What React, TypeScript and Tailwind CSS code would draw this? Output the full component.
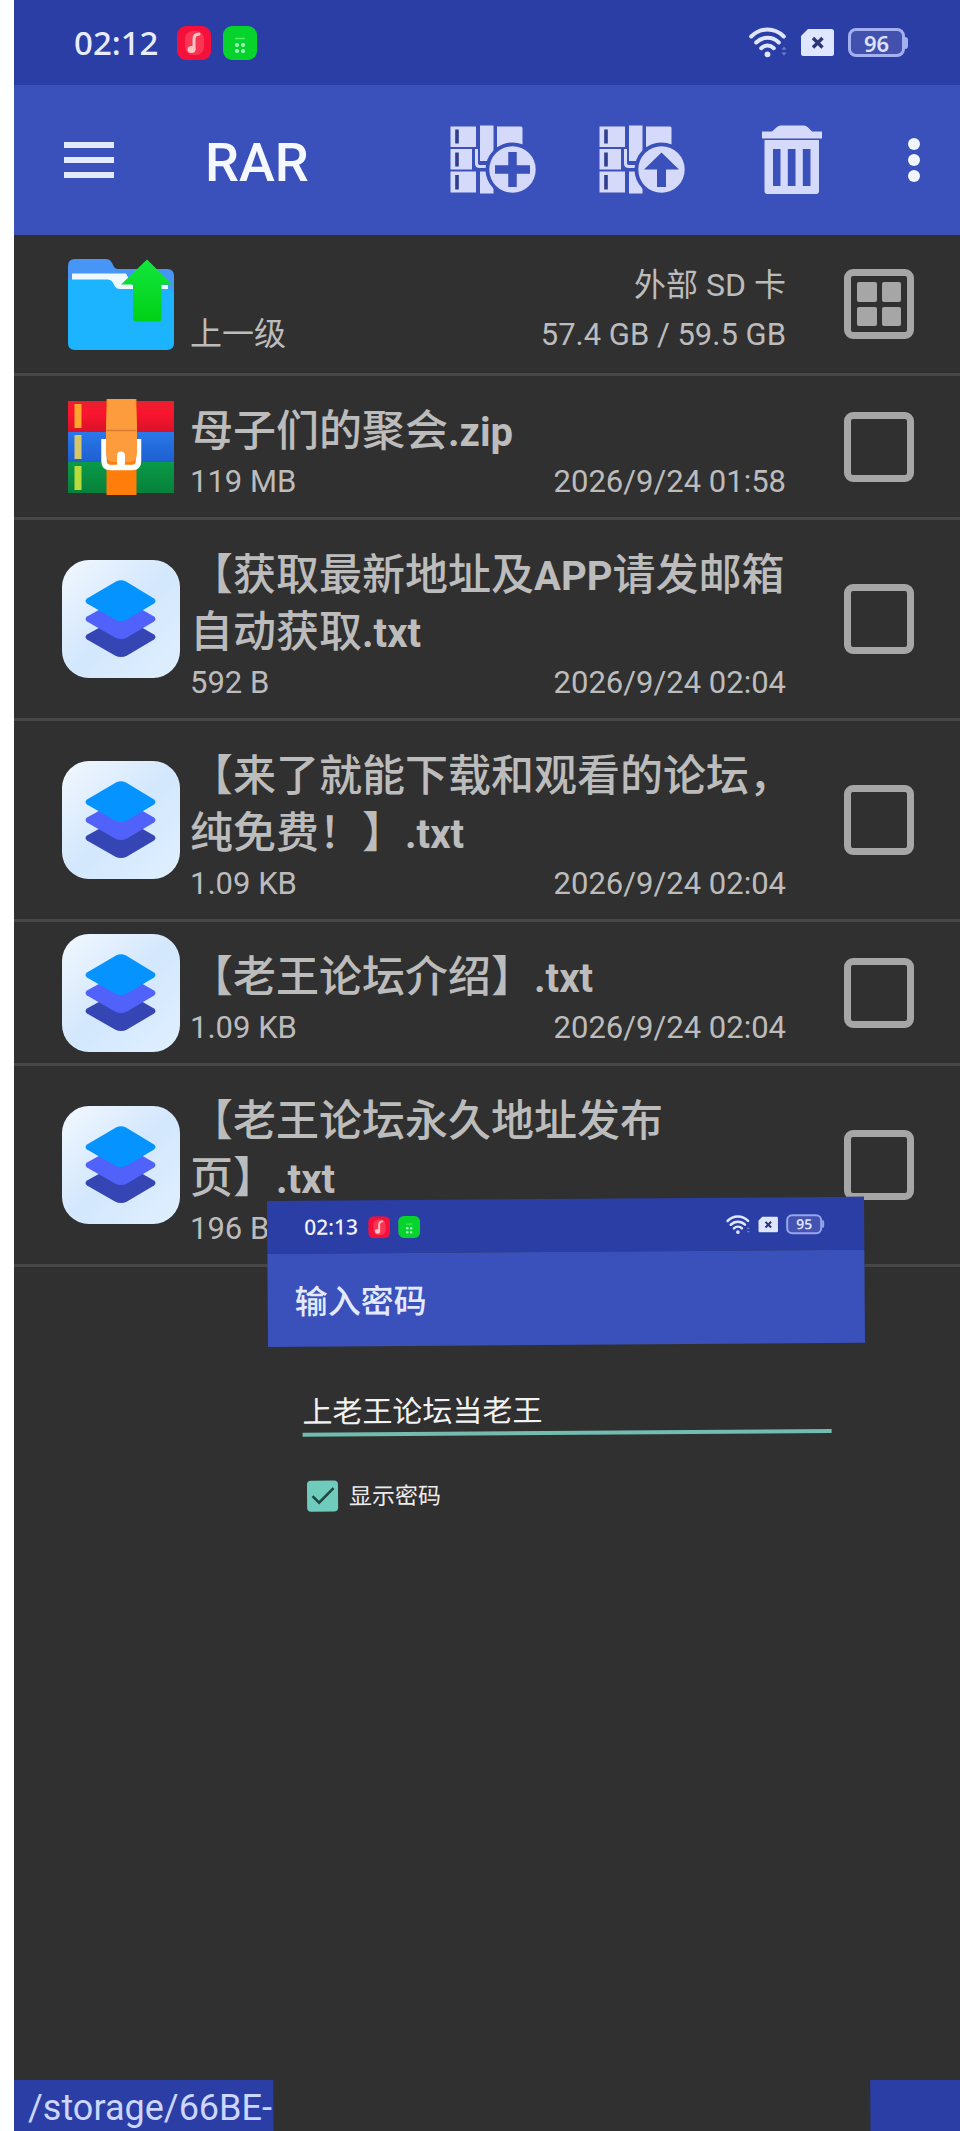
import React from "react";

const SANS = "font-['Roboto','Noto_Sans_CJK_SC',sans-serif]";
const CLOCK = "font-['Noto_Sans','Noto_Sans_CJK_SC',sans-serif]";

type FileEntry = { lines: string[]; size: string; date: string; kind: "zip" | "txt" };

const files: FileEntry[] = [
  { lines: ["母子们的聚会.zip"], size: "119 MB", date: "2026/9/24 01:58", kind: "zip" },
  { lines: ["【获取最新地址及APP请发邮箱", "自动获取.txt"], size: "592 B", date: "2026/9/24 02:04", kind: "txt" },
  { lines: ["【来了就能下载和观看的论坛，", "纯免费！】.txt"], size: "1.09 KB", date: "2026/9/24 02:04", kind: "txt" },
  { lines: ["【老王论坛介绍】.txt"], size: "1.09 KB", date: "2026/9/24 02:04", kind: "txt" },
  { lines: ["【老王论坛永久地址发布", "页】.txt"], size: "196 B", date: "2026/9/24 02:04", kind: "txt" },
];

function MusicIcon({ className }: { className: string }) {
  return (
    <svg viewBox="0 0 34 34" className={className} aria-hidden="true">
      <rect width="34" height="34" rx="9" fill="#f5103c" />
      <rect x="8" y="5" width="19" height="24" rx="8" fill="#fb4f63" opacity="0.6" />
      <path d="M22 8c-4 0-5 2-5 5v10" fill="none" stroke="#ffc4c4" strokeWidth="3" strokeLinecap="round" />
      <ellipse cx="14.5" cy="23.5" rx="4" ry="3.6" fill="#ffc4c4" />
    </svg>
  );
}

function GreenIcon({ className }: { className: string }) {
  return (
    <svg viewBox="0 0 34 34" className={className} aria-hidden="true">
      <rect width="34" height="34" rx="9" fill="#06d32c" />
      <path d="M12 12.5h10" stroke="#4df070" strokeWidth="1.5" />
      <g fill="#a4ffc0">
        <circle cx="14" cy="19" r="2" />
        <circle cx="20" cy="19" r="2" />
        <circle cx="14" cy="25" r="2" />
        <circle cx="20" cy="25" r="2" />
      </g>
    </svg>
  );
}

function WifiIcon({ className }: { className: string }) {
  return (
    <svg viewBox="0 0 38 31" className={className} aria-hidden="true">
      <g fill="none" stroke="#dfe6ff" strokeWidth="4" strokeLinecap="round">
        <path d="M2.2 9.5C11.5 .2 25.5 .2 34.8 9.5" />
        <path d="M7.2 15.5c6.5-6.3 16.1-6.3 22.6 0" />
        <path d="M12.2 21.2c3.7-3.5 8.9-3.5 12.6 0" />
      </g>
      <circle cx="18.5" cy="27.3" r="2.9" fill="#dfe6ff" />
      <path d="M32.5 22.5l2.5-3 2.5 3zM32.5 25.5l2.5 3 2.5-3z" fill="#6f7fd0" />
    </svg>
  );
}

function SimIcon({ className }: { className: string }) {
  return (
    <svg viewBox="0 0 33 27" className={className} aria-hidden="true">
      <path d="M7 0h23.500A2.500 2.500 0 0 1 33 2.500v22a2.500 2.500 0 0 1-2.500 2.500h-28A2.500 2.500 0 0 1 0 24.500V7z" fill="#dfe6ff" />
      <path d="M12 9l9.500 9.500M21.500 9L12 18.500" stroke="#2b3674" strokeWidth="3.400" />
    </svg>
  );
}

function ArchiveIcon({ children }: { children: React.ReactNode }) {
  return (
    <svg viewBox="0 0 87 70" className="h-[70px] w-[87px]" aria-hidden="true">
      <g fill="#d5dafa">
        <path d="M0.500 1.500H26V22H0.500zM0.500 24H22V44.500H0.500zM0.500 46.500H26V67.500H0.500z" />
        <path d="M30 0.500H43.500V36H30zM30 46.500H43.500V68.500H30z" />
        <path d="M47 1.500H71a1.500 1.500 0 0 1 1.500 1.500V22H47z" />
      </g>
      <path d="M26.500 24V38.500Q26.500 41.500 30 41.500H42" fill="none" stroke="#d5dafa" strokeWidth="3" />
      <path d="M7 4.500V18.500M7 27.500V41.500M7 50V64.500" stroke="#2e3f8f" strokeWidth="3.600" />
      <circle cx="62.500" cy="44.500" r="27" fill="#3a50ba" />
      <circle cx="62.500" cy="44.500" r="23.200" fill="#d5dafa" />
      {children}
    </svg>
  );
}

function TrashIcon() {
  return (
    <svg viewBox="0 0 60 70" className="h-[70px] w-[60px]" aria-hidden="true">
      <path d="M0 6.500H10L15 2Q16.500 .5 18.500 .5H42Q44 .5 45.500 2L50 6.500H60V13.500H0z" fill="#d5dafa" />
      <path
        fillRule="evenodd"
        d="M2.500 15H57V66a3 3 0 0 1-3 3H5.500a3 3 0 0 1-3-3zM11 24V61H18.500V24zM25.800 24V61H33.500V24zM40.800 24V61H48.500V24z"
        fill="#d5dafa"
      />
    </svg>
  );
}

function FolderUpIcon() {
  return (
    <svg viewBox="0 0 106 91" className="h-[91px] w-[106px]" aria-hidden="true">
      <defs>
        <linearGradient id="upArrow" x1="0" y1="0" x2="0" y2="1">
          <stop offset="0" stopColor="#12e63c" />
          <stop offset="1" stopColor="#00d016" />
        </linearGradient>
      </defs>
      <path d="M7 0H38Q42 0 44 4L46 8Q47.500 10 50 10H99Q106 10 106 17V50H0V7Q0 0 7 0z" fill="#4796f7" />
      <path d="M4 14.500H58L64 26H100V34H4z" fill="#eef9ff" />
      <path d="M0 20.500H40Q43 20.500 44.500 23L47 27.500Q48.500 30 52 30H100Q106 30 106 36V84Q106 91 99 91H7Q0 91 0 84z" fill="#1cb4ff" />
      <path d="M79 .5L104.500 25.500H93.500V59.500Q93.500 62.500 90.500 62.500H68Q65 62.500 65 59.500V25.500H53z" fill="url(#upArrow)" />
    </svg>
  );
}

function ZipIcon() {
  return (
    <svg viewBox="0 0 106 96" className="h-[96px] w-[106px]" aria-hidden="true">
      <defs>
        <linearGradient id="bandRed" x1="0" y1="0" x2="0" y2="1">
          <stop offset="0" stopColor="#e8202e" />
          <stop offset="0.400" stopColor="#fb1530" />
          <stop offset="1" stopColor="#d81228" />
        </linearGradient>
        <linearGradient id="bandBlue" x1="0" y1="0" x2="0" y2="1">
          <stop offset="0" stopColor="#2a78ea" />
          <stop offset="1" stopColor="#1d5fd0" />
        </linearGradient>
        <linearGradient id="bandGreen" x1="0" y1="0" x2="0" y2="1">
          <stop offset="0" stopColor="#0a9a48" />
          <stop offset="1" stopColor="#07803a" />
        </linearGradient>
      </defs>
      <path d="M0 2H106V33H0z" fill="url(#bandRed)" />
      <path d="M0 33H106V63H0z" fill="url(#bandBlue)" />
      <path d="M0 63H106V94H0z" fill="url(#bandGreen)" />
      <path d="M6.500 5H13.500V29H6.500z" fill="#ffa52c" />
      <path d="M6.500 36H13.500V60H6.500z" fill="#d8c66a" />
      <path d="M6.500 67H13.500V91H6.500z" fill="#b8dc3c" />
      <path d="M38.500 0H68.500V96H38.500z" fill="#ff7d0a" />
      <path d="M36 40V62Q36 68.500 42.500 68.500H64Q70.500 68.500 70.500 62V40" fill="none" stroke="#fff" strokeWidth="5.500" />
      <path d="M39.500 0H67.500Q69 18 69 32V54Q69 63 61 63H46Q38 63 38 54V32Q38 18 39.500 0z" fill="#fd9c3c" />
      <path d="M38.500 31.500H68.500" stroke="#d87a30" strokeWidth="1.500" />
      <path d="M49 66V57Q49 52.500 53 52.500T57 57V66z" fill="#fff" />
    </svg>
  );
}

function LayersIcon() {
  return (
    <svg viewBox="0 0 118 118" className="h-[118px] w-[118px]" aria-hidden="true">
      <defs>
        <linearGradient id="tile" x1="0" y1="0" x2="1" y2="1">
          <stop offset="0" stopColor="#f2f8ff" />
          <stop offset="0.500" stopColor="#d3e7fd" />
          <stop offset="1" stopColor="#dff0ff" />
        </linearGradient>
      </defs>
      <rect width="118" height="118" rx="27" fill="url(#tile)" />
      <path d="M25 74.500L54 58.500Q59 56 64 58.500L92 74.500Q95 77 92 79.500L65 95.500Q59 98.500 53 95.500L25 79.500Q22 77 25 74.500z" fill="#3545b4" />
      <path d="M25 56.500L54 40.500Q59 38 64 40.500L92 56.500Q95 59 92 61.500L65 77.500Q59 80.500 53 77.500L25 61.500Q22 59 25 56.500z" fill="#5162fb" />
      <path d="M25 38.500L54 21.500Q59 19 64 21.500L92 38.500Q95 41 92 43.500L65 59.500Q59 62.500 53 59.500L25 43.500Q22 41 25 38.500z" fill="#0594ff" />
    </svg>
  );
}

/* Latin runs are set bolder and slightly smaller than the Chinese text around them. */
function NameLine({ text }: { text: string }) {
  const runs = text.split(/([.A-Za-z]+)/).filter(Boolean);
  return (
    <span className="block">
      {runs.map((run) =>
        /^[.A-Za-z]/.test(run) ? (
          <b key={run} className="text-[40px] leading-none font-bold">{run}</b>
        ) : (
          <React.Fragment key={run}>{run}</React.Fragment>
        ),
      )}
    </span>
  );
}

function FileRow({ file }: { file: FileEntry }) {
  const name = file.lines.join("");
  return (
    <li className="flex items-center border-b-[3px] border-[#474747] pr-[46px] pl-12">
      <div className="flex w-[118px] shrink-0 justify-center">{file.kind === "zip" ? <ZipIcon /> : <LayersIcon />}</div>
      <div className="ml-[10px] min-w-0 flex-1 pt-[27px] pb-[13px]">
        <h2 className="text-[43px] leading-[57px] font-medium whitespace-nowrap">
          {file.lines.map((line) => (
            <NameLine key={line} text={line} />
          ))}
        </h2>
        <div className="flex justify-between pr-[58px] text-[31px] leading-[44px]">
          <span>{file.size}</span>
          <time>{file.date}</time>
        </div>
      </div>
      <input
        type="checkbox"
        aria-label={name}
        className="size-[70px] shrink-0 appearance-none rounded-[9px] border-[7px] border-[#a6a6a6] bg-transparent checked:bg-[#a6a6a6]"
      />
    </li>
  );
}

function PasswordPanel() {
  return (
    <section
      aria-label="输入密码"
      className="absolute top-[1201px] right-[96px] -bottom-4 left-[253px] origin-top-left -rotate-[0.4deg] bg-[#303030]"
    >
      <div className="flex h-[53px] items-center bg-[#2b3ea6] pr-10 pl-[37px]">
        <span className={`text-[21px] font-medium text-[#f0f3ff] ${CLOCK}`}>02:13</span>
        <MusicIcon className="ml-[10px] size-[22px]" />
        <GreenIcon className="ml-2 size-[22px]" />
        <div className="ml-auto flex items-center gap-2">
          <WifiIcon className="h-5 w-6" />
          <SimIcon className="h-4 w-5" />
          <Battery value="95" small />
        </div>
      </div>
      <div className="flex h-[93px] items-center bg-[#3a50ba] px-[27px] pt-1">
        <h2 className="text-[33px] font-medium text-[#e3eaff]">输入密码</h2>
      </div>
      <form className="px-[34px] pt-10" onSubmit={(e) => e.preventDefault()}>
        <input
          type="text"
          aria-label="密码"
          defaultValue="上老王论坛当老王"
          className="block h-[50px] w-full border-b-4 border-[#72bdb0] bg-transparent text-[30px] text-[#f2f2f2] outline-none"
        />
        <label className="mt-10 flex items-center gap-[11px] pl-[3px] text-[23px] text-[#ececec]">
          <span className="grid size-8 place-items-center">
            <input
              type="checkbox"
              defaultChecked
              className="col-start-1 row-start-1 size-[31px] appearance-none rounded-[4px] bg-[#6fcbbb]"
            />
            <svg viewBox="0 0 31 31" className="pointer-events-none col-start-1 row-start-1 size-[31px]" aria-hidden="true">
              <path d="M5.500 15.500L12 22L26.500 7.500" fill="none" stroke="#1f4640" strokeWidth="2.600" />
            </svg>
          </span>
          <span className="pt-1">显示密码</span>
        </label>
      </form>
    </section>
  );
}

function Battery({ value, small = false }: { value: string; small?: boolean }) {
  return (
    <div className="flex items-center">
      <span
        className={
          small
            ? `flex h-5 w-9 items-center justify-center rounded-[6px] border-2 border-[#96a5ee] bg-[#4453b0] text-[14px] leading-none font-semibold text-[#dbe3ff] ${CLOCK}`
            : `flex h-[29px] w-[57px] items-center justify-center rounded-[8px] border-[3px] border-[#a3b1f3] bg-[#4351ae] text-[22px] leading-none font-semibold text-[#dbe3ff] ${CLOCK}`
        }
      >
        {value}
      </span>
      <span className={small ? "h-2 w-[2px] rounded-r bg-[#96a5ee]" : "h-3 w-[3px] rounded-r bg-[#a3b1f3]"} />
    </div>
  );
}

export default function App() {
  return (
    <div className="bg-white pl-[14px]">
      <div className={`relative flex min-h-screen flex-col overflow-hidden bg-[#303030] text-[#bcbcbc] ${SANS}`}>
        <div className="flex h-[85px] items-center bg-[#2b3ea6] pr-[52px] pl-[60px]">
          <span className={`text-[33px] font-medium text-[#e8edff] ${CLOCK}`}>02:12</span>
          <MusicIcon className="ml-[19px] size-[34px]" />
          <GreenIcon className="ml-3 size-[34px]" />
          <div className="ml-auto flex items-center gap-[14px]">
            <WifiIcon className="h-[31px] w-[38px]" />
            <SimIcon className="h-[27px] w-[33px]" />
            <Battery value="96" />
          </div>
        </div>

        <header className="flex h-[150px] items-center bg-[#3a50ba] pr-10 pl-[50px]">
          <button type="button" aria-label="菜单" className="flex w-[50px] flex-col gap-[9px]">
            <span className="h-[6px] bg-[#e3eaff]" />
            <span className="h-[6px] bg-[#e3eaff]" />
            <span className="h-[6px] bg-[#e3eaff]" />
          </button>
          <h1 className="ml-[91px] pt-1 text-[54px] font-medium text-[#f5f8ff]">RAR</h1>
          <div className="ml-auto flex items-center">
            <button type="button" aria-label="添加到压缩文件">
              <ArchiveIcon>
                <path d="M62.500 27V62M45 44.500H80" stroke="#3a50ba" strokeWidth="8.500" />
              </ArchiveIcon>
            </button>
            <button type="button" aria-label="解压文件" className="ml-[62px]">
              <ArchiveIcon>
                <path d="M62.500 27.500L80 44.500H67V62H58V44.500H45z" fill="#3a50ba" />
              </ArchiveIcon>
            </button>
            <button type="button" aria-label="删除" className="ml-[76px]">
              <TrashIcon />
            </button>
            <button type="button" aria-label="更多" className="ml-[86px] flex flex-col gap-1">
              <span className="size-3 rounded-full bg-[#f1f6ff]" />
              <span className="size-3 rounded-full bg-[#f1f6ff]" />
              <span className="size-3 rounded-full bg-[#f1f6ff]" />
            </button>
          </div>
        </header>

        <main className="flex-1">
          <ul>
            <li className="flex h-[141px] items-center border-b-[3px] border-[#474747] pr-[46px] pl-12">
              <div className="flex w-[118px] shrink-0 justify-center">
                <FolderUpIcon />
              </div>
              <div className="ml-[10px] flex flex-1 items-end justify-between pt-3 pr-[58px] text-[32px] leading-[49px]">
                <span>上一级</span>
                <div className="text-right">
                  <p>外部 SD 卡</p>
                  <p className="text-[31px]">57.4 GB / 59.5 GB</p>
                </div>
              </div>
              <button
                type="button"
                aria-label="全选"
                className="grid size-[70px] shrink-0 grid-cols-2 gap-[5px] rounded-[9px] border-[7px] border-[#a6a6a6] p-[6px]"
              >
                <span className="rounded-[2px] bg-[#a6a6a6]" />
                <span className="rounded-[2px] bg-[#a6a6a6]" />
                <span className="rounded-[2px] bg-[#a6a6a6]" />
                <span className="rounded-[2px] bg-[#a6a6a6]" />
              </button>
            </li>
            {files.map((file) => (
              <FileRow key={file.lines[0]} file={file} />
            ))}
          </ul>
        </main>

        <footer className="h-[51px] bg-[#2b3ea6] pl-[14px] text-[36px] leading-[56px] text-[#ccd6ff]">/storage/66BE-</footer>

        <PasswordPanel />
      </div>
    </div>
  );
}
